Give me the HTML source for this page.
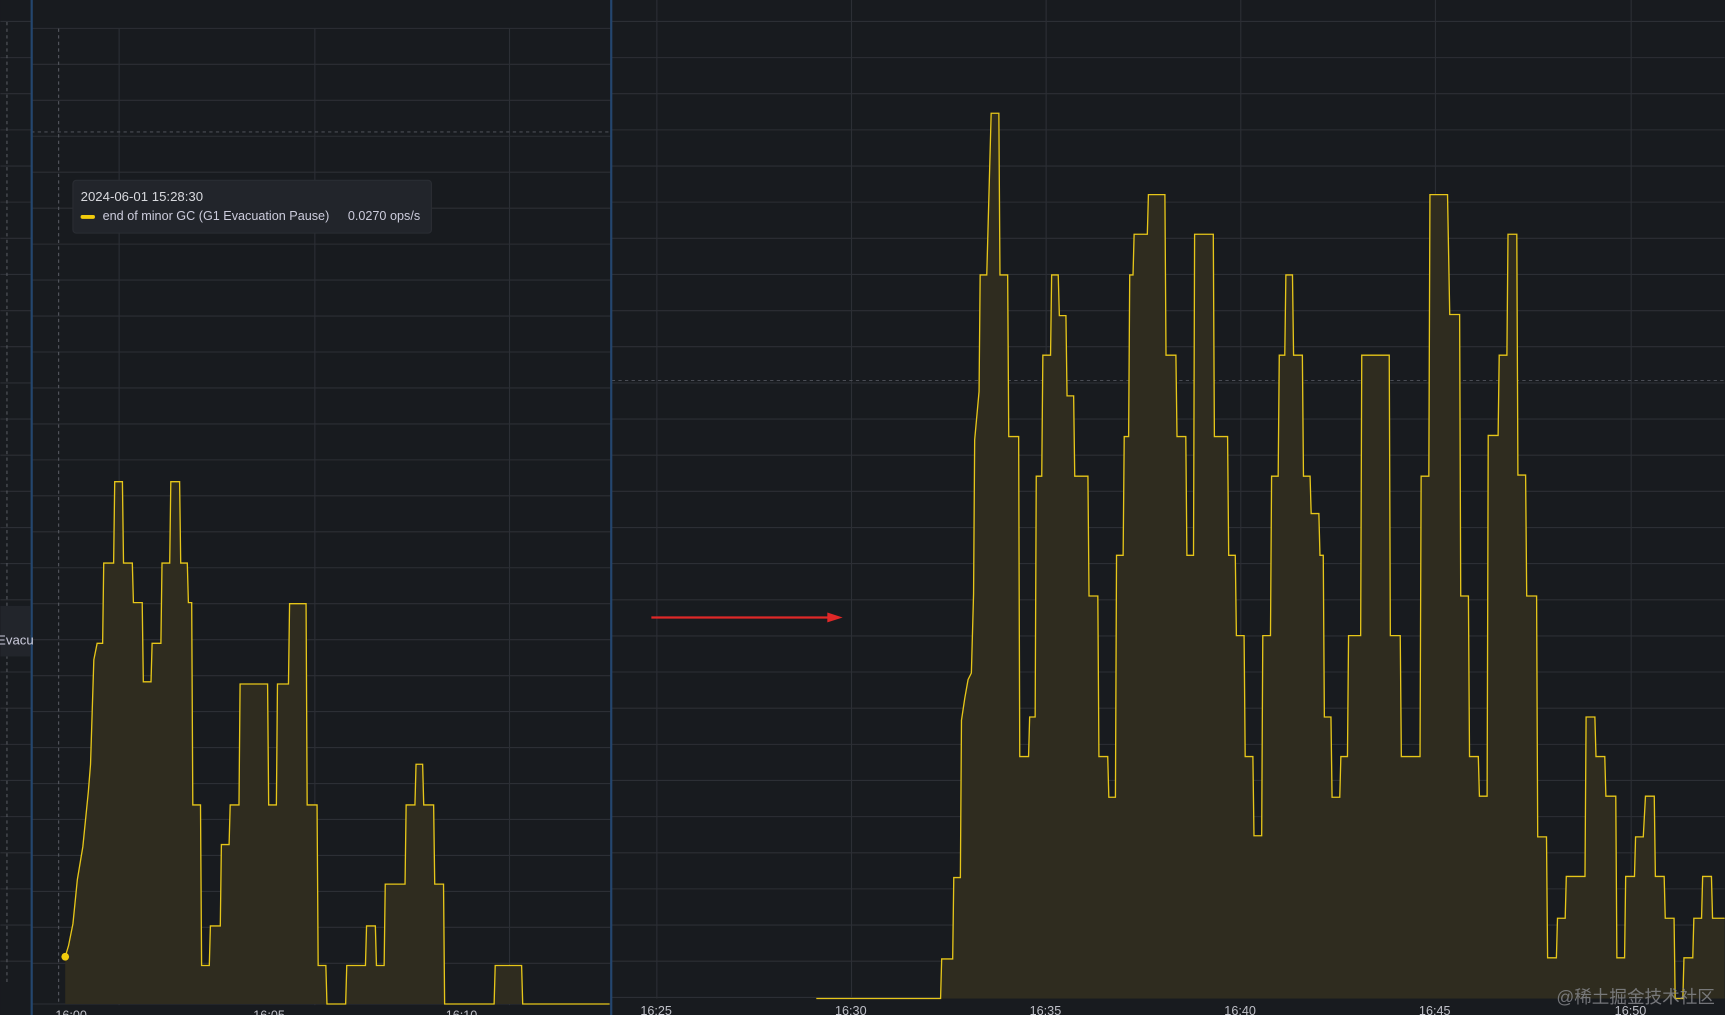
<!DOCTYPE html>
<html><head><meta charset="utf-8"><style>
html,body{margin:0;padding:0;background:#181b1f;overflow:hidden}
svg{display:block}
text{font-family:"Liberation Sans","Noto Sans CJK SC",sans-serif}
</style></head><body>
<svg width="1725" height="1015" viewBox="0 0 1568 923" xmlns="http://www.w3.org/2000/svg">
<rect width="1568" height="923" fill="#181b1f"/>
<g stroke="#2c2f35" stroke-width="1">
<path d="M0 19.5H1568M0 52.4H1568M0 85.2H1568M0 118.1H1568M0 151H1568M0 183.8H1568M0 216.7H1568M0 249.6H1568M0 282.5H1568M0 315.3H1568M0 348.2H1568M0 381.1H1568M0 413.9H1568M0 446.8H1568M0 479.7H1568M0 512.5H1568M0 545.4H1568M0 578.3H1568M0 611.1H1568M0 644H1568M0 676.9H1568M0 709.7H1568M0 742.6H1568M0 775.5H1568M0 808.3H1568M0 841.2H1568M0 874.1H1568M556 907H1568"/>
<path d="M597 0V908M774 0V908M951 0V908M1128 0V908M1305 0V908M1483 0V908"/>
</g>
<line x1="556" y1="346" x2="1568" y2="346" stroke="#4a4d55" stroke-dasharray="3,3"/>
<line x1="6" y1="20" x2="6" y2="895" stroke="#55585f" stroke-dasharray="3,3"/>
<rect x="28" y="0" width="527" height="923" fill="#181b1f"/>
<g stroke="#2c2f35">
<path d="M28 25.8H555M28 58.5H555M28 91.2H555M28 123.9H555M28 156.6H555M28 189.3H555M28 222H555M28 254.7H555M28 287.4H555M28 320.1H555M28 352.8H555M28 385.5H555M28 418.2H555M28 450.9H555M28 483.6H555M28 516.3H555M28 549H555M28 581.7H555M28 614.4H555M28 647.1H555M28 679.8H555M28 712.5H555M28 745.2H555M28 777.9H555M28 810.6H555M28 843.3H555M28 876H555M28 913H555"/>
<path d="M108 26V914M286 26V914M463 26V914"/>
</g>
<line x1="28" y1="120" x2="555" y2="120" stroke="#4a4d55" stroke-dasharray="3,3"/>
<line x1="53" y1="26" x2="53" y2="914" stroke="#55585f" stroke-dasharray="3,3"/>
<line x1="28.5" y1="0" x2="28.5" y2="923" stroke="#24466e" stroke-width="2"/>
<line x1="555.5" y1="0" x2="555.5" y2="923" stroke="#24466e" stroke-width="2"/>
<path d="M59 913L59 870L62 860L66 840L70 800L75 770L78 740L80 720L82 695L85 600L88 585L93 585L94 512L103 512L104 438L111 438L112 512L120 512L121 548L129 548L130 620L137 620L138 585L146 585L147 512L154 512L155 438L163 438L164 512L170 512L171 548L174 548L175 732L182 732L183 878L190 878L191 842L200 842L201 768L208 768L209 732L217 732L218 622L243 622L244 732L251 732L252 622L262 622L263 549L278 549L279 732L288 732L289 878L296 878L297 913L314 913L315 878L332 878L333 842L341 842L342 878L349 878L350 804L368 804L369 732L377 732L378 695L384 695L385 732L394 732L395 804L403 804L404 913L449 913L450 878L474 878L475 913L554 913Z" fill="#2f2c1f" stroke="none"/>
<path d="M59 870L62 860L66 840L70 800L75 770L78 740L80 720L82 695L85 600L88 585L93 585L94 512L103 512L104 438L111 438L112 512L120 512L121 548L129 548L130 620L137 620L138 585L146 585L147 512L154 512L155 438L163 438L164 512L170 512L171 548L174 548L175 732L182 732L183 878L190 878L191 842L200 842L201 768L208 768L209 732L217 732L218 622L243 622L244 732L251 732L252 622L262 622L263 549L278 549L279 732L288 732L289 878L296 878L297 913L314 913L315 878L332 878L333 842L341 842L342 878L349 878L350 804L368 804L369 732L377 732L378 695L384 695L385 732L394 732L395 804L403 804L404 913L449 913L450 878L474 878L475 913L554 913" fill="none" stroke="#e6c619" stroke-width="1.2"/>
<circle cx="59" cy="870" r="3.5" fill="#f2cc0c"/>
<path d="M742 908L855 908L856 872L866 872L867 798L873 798L874 655L877 635L880 618L883 612L885 540L886 400L890 356L891 250L897 250L901 103L908 103L909 250L916 250L917 397L926 397L927 688L935 688L936 652L941 652L942 433L947 433L948 323L955 323L956 250L962 250L963 287L969 287L970 360L976 360L977 433L989 433L990 542L998 542L999 688L1007 688L1008 725L1014 725L1015 505L1021 505L1022 397L1026 397L1027 250L1030 250L1031 213L1043 213L1044 177L1059 177L1060 323L1069 323L1070 397L1078 397L1079 505L1085 505L1086 213L1103 213L1104 397L1116 397L1117 505L1123 505L1124 578L1131 578L1132 688L1139 688L1140 760L1147 760L1148 578L1155 578L1156 433L1162 433L1163 323L1168 323L1169 250L1175 250L1176 323L1184 323L1185 433L1191 433L1192 467L1199 467L1200 505L1203 505L1204 652L1210 652L1211 725L1218 725L1219 688L1225 688L1226 578L1237 578L1238 323L1263 323L1264 578L1273 578L1274 688L1291 688L1292 433L1299 433L1300 177L1316 177L1318 286L1327 286L1328 542L1335 542L1336 688L1344 688L1345 724L1352 724L1353 396L1362 396L1363 323L1370 323L1371 213L1379 213L1380 432L1387 432L1388 542L1397 542L1398 761L1406 761L1407 871L1415 871L1416 835L1423 835L1424 797L1441 797L1442 652L1450 652L1451 688L1459 688L1460 724L1469 724L1470 871L1477 871L1478 797L1486 797L1487 761L1494 761L1496 724L1504 724L1505 797L1513 797L1514 835L1522 835L1523 908L1530 908L1531 871L1539 871L1540 835L1547 835L1548 797L1556 797L1557 835L1568 835L1568 908Z" fill="#2f2c1f" stroke="none"/>
<path d="M742 908L855 908L856 872L866 872L867 798L873 798L874 655L877 635L880 618L883 612L885 540L886 400L890 356L891 250L897 250L901 103L908 103L909 250L916 250L917 397L926 397L927 688L935 688L936 652L941 652L942 433L947 433L948 323L955 323L956 250L962 250L963 287L969 287L970 360L976 360L977 433L989 433L990 542L998 542L999 688L1007 688L1008 725L1014 725L1015 505L1021 505L1022 397L1026 397L1027 250L1030 250L1031 213L1043 213L1044 177L1059 177L1060 323L1069 323L1070 397L1078 397L1079 505L1085 505L1086 213L1103 213L1104 397L1116 397L1117 505L1123 505L1124 578L1131 578L1132 688L1139 688L1140 760L1147 760L1148 578L1155 578L1156 433L1162 433L1163 323L1168 323L1169 250L1175 250L1176 323L1184 323L1185 433L1191 433L1192 467L1199 467L1200 505L1203 505L1204 652L1210 652L1211 725L1218 725L1219 688L1225 688L1226 578L1237 578L1238 323L1263 323L1264 578L1273 578L1274 688L1291 688L1292 433L1299 433L1300 177L1316 177L1318 286L1327 286L1328 542L1335 542L1336 688L1344 688L1345 724L1352 724L1353 396L1362 396L1363 323L1370 323L1371 213L1379 213L1380 432L1387 432L1388 542L1397 542L1398 761L1406 761L1407 871L1415 871L1416 835L1423 835L1424 797L1441 797L1442 652L1450 652L1451 688L1459 688L1460 724L1469 724L1470 871L1477 871L1478 797L1486 797L1487 761L1494 761L1496 724L1504 724L1505 797L1513 797L1514 835L1522 835L1523 908L1530 908L1531 871L1539 871L1540 835L1547 835L1548 797L1556 797L1557 835L1568 835" fill="none" stroke="#e6c619" stroke-width="1.2"/>
<line x1="592" y1="561.5" x2="755" y2="561.5" stroke="#e02828" stroke-width="2"/>
<path d="M752 557L766 561.5L752 566Z" fill="#e02828"/>
<rect x="66" y="164" width="326" height="48" rx="3" fill="#22252b" stroke="#2a2d33"/>
<text x="73" y="183" font-size="12" fill="#d8d9de">2024-06-01 15:28:30</text>
<rect x="73" y="195.5" width="13" height="3.5" rx="1.5" fill="#f2cc0c"/>
<text x="93" y="200" font-size="11.5" fill="#ccccdc">end of minor GC (G1 Evacuation Pause)</text>
<text x="316" y="200" font-size="11.5" fill="#ccccdc">0.0270 ops/s</text>
<rect x="0" y="551" width="27" height="46" fill="#22252b"/>
<text x="-3" y="586" font-size="12" fill="#ccccdc">Evacu</text>
<g font-size="11.5" fill="#bfc0c8">
<text x="582" y="923">16:25</text><text x="759" y="923">16:30</text><text x="936" y="923">16:35</text><text x="1113" y="923">16:40</text><text x="1290" y="923">16:45</text><text x="1468" y="923">16:50</text>
<text x="50" y="927">16:00</text><text x="230" y="927">16:05</text><text x="405" y="927">16:10</text>
</g>
<text x="1415" y="912" font-size="16" fill="#8a8b90" opacity="0.8">@稀土掘金技术社区</text>
</svg>
</body></html>
